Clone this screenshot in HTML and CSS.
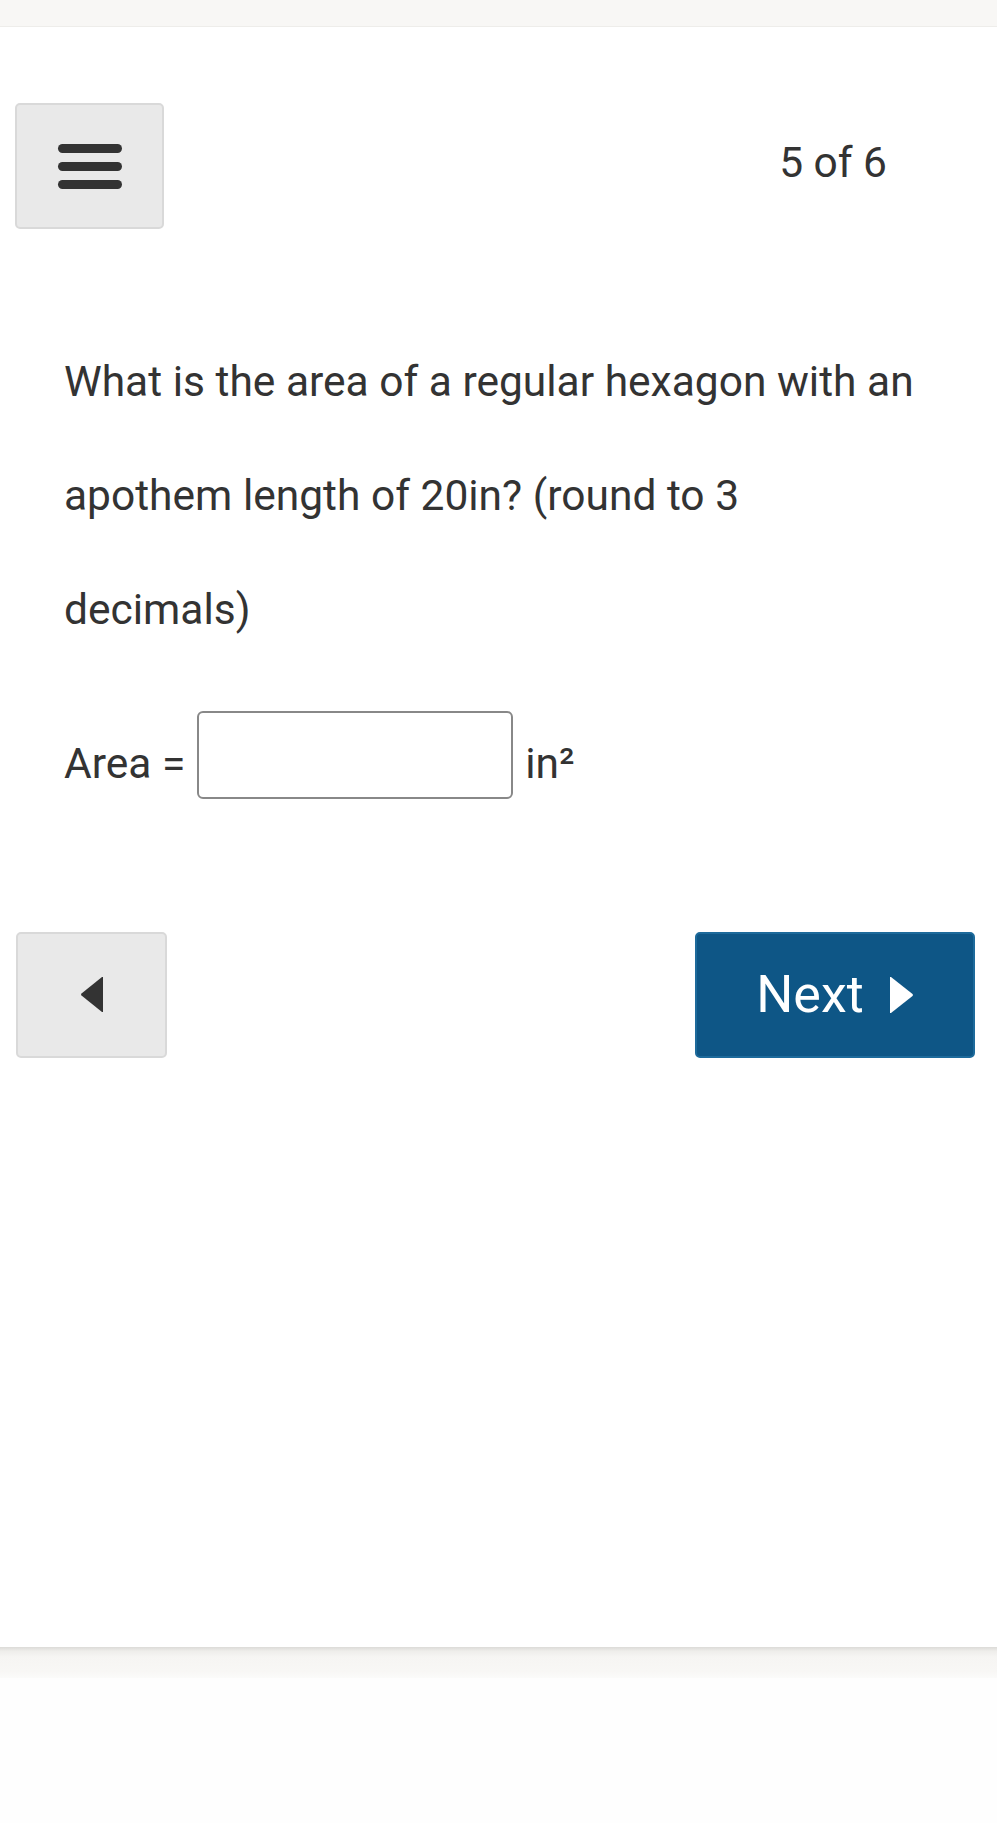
FILE: index.html
```html
<!DOCTYPE html>
<html lang="en">
<head>
<meta charset="utf-8">
<title>Question 5 of 6</title>
<link rel="stylesheet" href="styles.css">
</head>
<body>
<div class="topbar"></div>
<main class="page">
  <header class="head">
    <button class="menu-btn" type="button" aria-label="Menu">
      <span class="bar"></span>
      <span class="bar"></span>
      <span class="bar"></span>
    </button>
    <span class="count">5 of 6</span>
  </header>
  <p class="question">What is the area of a regular hexagon with an apothem length of 20in? (round to 3 decimals)</p>
  <div class="answer">
    <span class="label">Area =</span>
    <input class="field" type="text" aria-label="Area">
    <span class="unit">in²</span>
  </div>
  <nav class="nav">
    <button class="back-btn" type="button" aria-label="Previous">
      <svg width="24" height="37" viewBox="0 0 24 37"><path d="M23 1 L23 36 L22 36 L1.5 19.5 Q0.5 18.5 1.5 17.5 L22 1 Z" fill="#333"/></svg>
    </button>
    <button class="next-btn" type="button">
      <span>Next</span>
      <svg width="25" height="38" viewBox="0 0 25 38"><path d="M1 1 L1 37 L2 37 L23.5 20 Q24.5 19 23.5 18 L2 1 Z" fill="#fff"/></svg>
    </button>
  </nav>
</main>
<div class="footbar"></div>
</body>
</html>
```
FILE: styles.css
```css
html, body {
  margin: 0;
  padding: 0;
  background: #fefefe;
}
body {
  font-family: Roboto, "Liberation Sans", Arial, sans-serif;
  color: #333;
}
.topbar {
  height: 26px;
  background: #f8f7f5;
  border-bottom: 1px solid #eeedea;
}
.page {
  height: 1620px;
  background: #fff;
  display: flex;
  flex-direction: column;
}
.head {
  margin-top: 76px;
  padding: 0 110px 0 15px;
  display: flex;
  align-items: center;
  justify-content: space-between;
}
.menu-btn {
  width: 149px;
  height: 126px;
  box-sizing: border-box;
  background: #e9e9e9;
  border: 2px solid #d9d9d9;
  border-radius: 5px;
  display: flex;
  flex-direction: column;
  align-items: center;
  justify-content: center;
  gap: 9px;
  padding: 0;
}
.bar {
  display: block;
  width: 64px;
  height: 9px;
  border-radius: 5px;
  background: #333;
}
.count {
  font-size: 42.5px;
  line-height: 50px;
  margin-top: -7px;
}
.question {
  margin: 96px 0 0;
  padding: 0 75px 0 64px;
  font-size: 42.5px;
  line-height: 114px;
}
.answer {
  margin-top: 44px;
  padding-left: 64px;
  display: flex;
  align-items: flex-end;
}
.label, .unit {
  font-size: 42.5px;
  line-height: 50px;
  margin-bottom: 10px;
}
.label {
  margin-right: 12px;
}
.field {
  width: 316px;
  height: 88px;
  box-sizing: border-box;
  border: 2px solid #888;
  border-radius: 6px;
  background: #fff;
  margin: 0 12px 0 0;
  padding: 0 10px;
  font: inherit;
  font-size: 42.5px;
}
.nav {
  margin-top: 133px;
  padding: 0 22px 0 16px;
  display: flex;
  justify-content: space-between;
}
.back-btn {
  width: 151px;
  height: 126px;
  box-sizing: border-box;
  background: #e9e9e9;
  border: 2px solid #d9d9d9;
  border-radius: 5px;
  display: flex;
  align-items: center;
  justify-content: center;
  padding: 0;
}
.back-btn svg {
  margin-top: -1px;
}
.next-btn {
  width: 280px;
  height: 126px;
  box-sizing: border-box;
  background: #0e5686;
  border: 2px solid #1d6a9b;
  border-radius: 5px;
  display: flex;
  align-items: center;
  justify-content: center;
  gap: 25px;
  padding: 0;
  color: #fff;
  font-family: Roboto, "Liberation Sans", Arial, sans-serif;
  font-size: 52px;
}
.next-btn span {
  line-height: 60px;
}
.footbar {
  height: 31px;
  background: linear-gradient(to bottom, #dcdbd8 0px, #eeedea 4px, #f6f5f3 10px, #f8f7f5 24px, #fbfbfa 31px);
}
```
